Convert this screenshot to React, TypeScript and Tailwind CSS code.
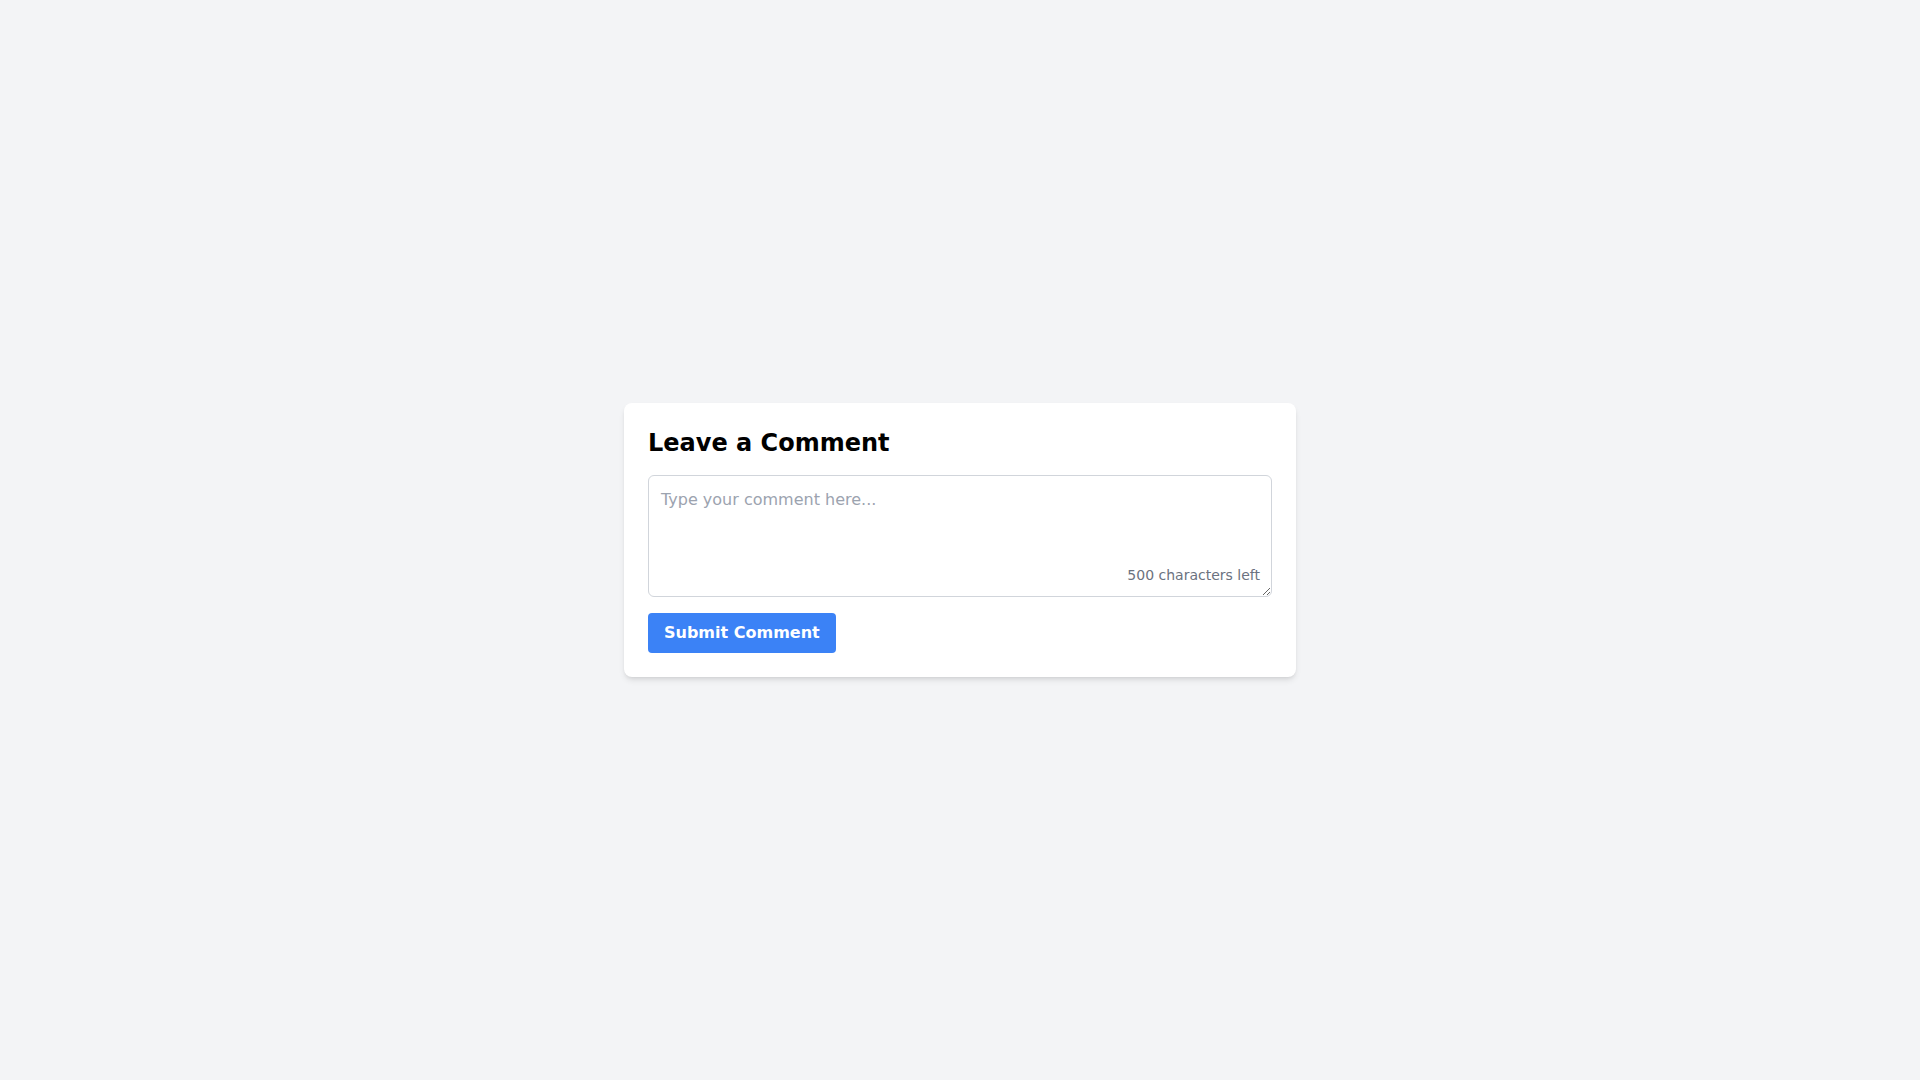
import { useState } from "react";

const MAX = 500;

export default function App() {
  const [text, setText] = useState("");

  return (
    <div className="min-h-screen flex items-center justify-center bg-[#f3f4f6] font-['DejaVu_Sans',sans-serif]">
      <div className="w-full max-w-2xl bg-white rounded-lg shadow-md p-6">
        <h2 className="text-2xl font-bold mb-4 text-black">Leave a Comment</h2>
        <div className="relative mb-4">
          <textarea
            value={text}
            onChange={(e) => setText(e.target.value.slice(0, MAX))}
            rows={4}
            placeholder="Type your comment here..."
            className="block w-full p-3 border border-[#d1d5db] rounded-md text-base text-[#1f2937] placeholder-[#9ca3af] focus:outline-none"
          />
          <span className="absolute bottom-3 right-3 text-sm text-[#6b7280]">
            {MAX - text.length} characters left
          </span>
        </div>
        <button className="bg-[#3b82f6] text-white font-bold py-2 px-4 rounded">
          Submit Comment
        </button>
      </div>
    </div>
  );
}
